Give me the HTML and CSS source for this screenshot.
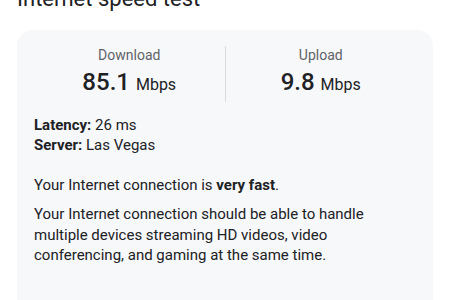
FILE: index.html
```html
<!DOCTYPE html>
<html>

<head>
  <title>Internet speed test</title>
  <link rel="stylesheet" href="styles.css">
</head>

<body>
  <h1 class="title">Internet speed test</h1>

  <div class="card">
    <div class="stats">
      <div class="stat">
        <div class="stat-label">Download</div>
        <div class="stat-value">85.1 <span class="unit">Mbps</span></div>
      </div>
      <div class="divider"></div>
      <div class="stat">
        <div class="stat-label">Upload</div>
        <div class="stat-value">9.8 <span class="unit">Mbps</span></div>
      </div>
    </div>

    <div class="details">
      <div><b>Latency:</b> 26 ms</div>
      <div><b>Server:</b> Las Vegas</div>
    </div>

    <p class="summary">Your Internet connection is <b>very fast</b>.</p>
    <p class="desc">Your Internet connection should be able to handle multiple devices streaming HD videos, video
      conferencing, and gaming at the same time.</p>
  </div>
</body>

</html>
```

FILE: styles.css
```css
body {
  margin: 0;
  padding: 0 17px;
  font-family: Roboto, "Noto Sans", sans-serif;
  color: #202124;
  background-color: #fff;
}

.title {
  margin: -15px 0 0;
  font-size: 22px;
  line-height: 28px;
  font-weight: 400;
}

.card {
  margin-top: 17px;
  padding: 16px 17px 40px;
  background-color: #f7f8fa;
  border-radius: 16px;
  height: 300px;
}

.stats {
  display: flex;
}

.stat {
  flex: 1;
  text-align: center;
}

.divider {
  width: 1px;
  background-color: #dadce0;
}

.stat-label {
  font-size: 14px;
  line-height: 16px;
  padding-top: 1px;
  color: #5f6368;
}

.stat-value {
  padding-top: 2px;
  font-size: 24px;
  line-height: 34px;
  font-weight: 500;
}

.unit {
  font-size: 16px;
  font-weight: 400;
}

.details {
  margin-top: 13px;
  font-size: 15px;
  line-height: 20px;
}

.details b,
.summary b {
  font-weight: 700;
}

.summary {
  margin: 20px 0 0;
  font-size: 15px;
  line-height: 21px;
}

.desc {
  margin: 8px 0 0;
  font-size: 15px;
  line-height: 20.5px;
}
```
